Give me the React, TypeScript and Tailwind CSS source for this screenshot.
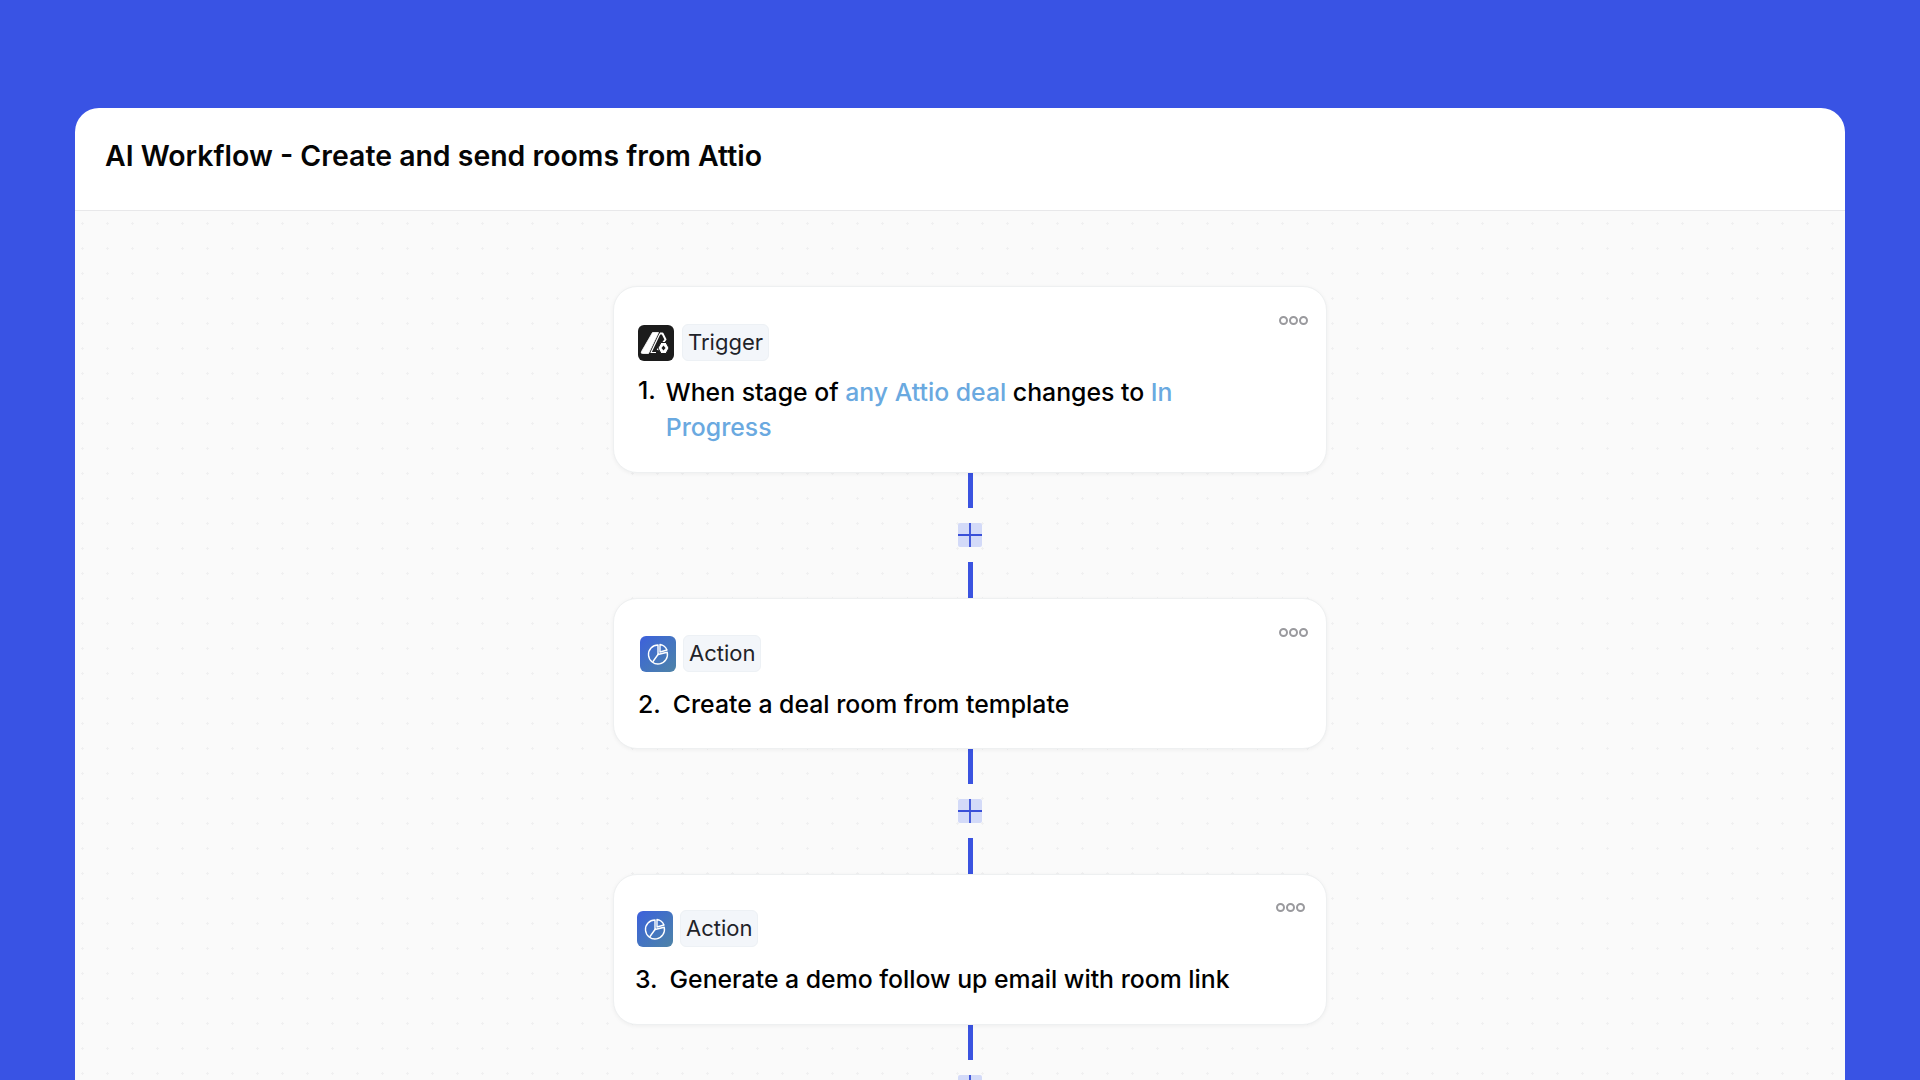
import type { ReactNode } from 'react';

const FONT = "font-['Inter','Noto_Sans',sans-serif]";

function AttioLogo() {
  return (
    <div className="w-[36px] h-[36px] rounded-[6px] bg-[#1c1c1c] flex items-center justify-center">
      <svg width="36" height="36" viewBox="0 0 36 36">
        <path d="M14.5 7.5 L20.5 7.5 L10.5 28.5 L4.5 28.5 Q2.5 28.5 3.5 26.5 Z" fill="#fff" stroke="#fff" strokeWidth="0.8" strokeLinejoin="round" />
        <path d="M22 8.5 L24.5 8.5 L27.5 14.5 L19.5 25" fill="none" stroke="#fff" strokeWidth="2" strokeLinejoin="round" />
        <path d="M22 8.5 L13 27.5 L18 27.5" fill="none" stroke="#fff" strokeWidth="1.2" strokeLinejoin="round" />
        <path d="M23 17.5 L28 17.5 L31 23 L28 28.5 L23 28.5 L20 23 Z" fill="#fff" stroke="#1c1c1c" strokeWidth="1" />
        <path d="M25.5 20.5 L27.5 23 L25.5 25.5 L23.5 23 Z" fill="#1c1c1c" />
      </svg>
    </div>
  );
}

function RoomIcon() {
  return (
    <div className="w-[36px] h-[36px] rounded-[6px] bg-gradient-to-br from-[#3d5fdc] to-[#4f83a6] flex items-center justify-center">
      <svg width="24" height="24" viewBox="0 0 24 24" fill="none" stroke="#fff" strokeWidth="1.4" strokeLinecap="round" strokeLinejoin="round">
        <path d="M12 3a9.5 9.5 0 1 0 9.2 7.2L12 12.5Z" />
        <path d="M12 12.5 7 19.5" />
        <path d="M14 2.4a9.5 9.5 0 0 1 7 5.6l-7 2Z" />
      </svg>
    </div>
  );
}

function Badge({ children }: { children: ReactNode }) {
  return (
    <span className="h-[37px] px-[5px] flex items-center rounded-[6px] bg-[#f3f6fa] border border-[#edf1f5] text-[22px] text-[#1f2329]">
      {children}
    </span>
  );
}

function Connector() {
  return (
    <div className="flex flex-col items-center">
      <div className="w-[5px] h-[35px] bg-[#3a53e0]" />
      <div className="mt-[15px] w-[24px] h-[24px] rounded-[2px] bg-[#d3daf8] flex items-center justify-center">
        <svg width="26" height="26" viewBox="0 0 26 26" fill="none" stroke="#3a50d8" strokeWidth="2">
          <path d="M13 0v26M0 13h26" />
        </svg>
      </div>
      <div className="mt-[15px] w-[5px] h-[36px] bg-[#3a53e0]" />
    </div>
  );
}

function Card({ icon, label, number, children, box, headClass, textClass, menuPos, numberUp }: {
  icon: ReactNode;
  label: string;
  number: string;
  children: ReactNode;
  box: string;
  headClass: string;
  textClass: string;
  menuPos: string;
  numberUp?: boolean;
}) {
  return (
    <div className={`relative w-[714px] ${box} bg-white rounded-[24px] border border-[#eef0f1] shadow-[0_1px_4px_rgba(0,0,0,0.05)]`}>
      <div className={`absolute ${menuPos} flex gap-[1px]`}>
        <span className="w-[9px] h-[9px] rounded-full border-[2px] border-[#9a9a9e]" />
        <span className="w-[9px] h-[9px] rounded-full border-[2px] border-[#9a9a9e]" />
        <span className="w-[9px] h-[9px] rounded-full border-[2px] border-[#9a9a9e]" />
      </div>
      <div className={`flex items-center ${headClass}`}>
        {icon}
        <Badge>{label}</Badge>
      </div>
      <div className={`${textClass} flex text-[24.8px] leading-[35px] font-[450] text-black`}>
        <span className={numberUp ? 'shrink-0 -mt-[2px]' : 'shrink-0'}>{number}</span>
        <div>{children}</div>
      </div>
    </div>
  );
}

export default function App() {
  return (
    <div className={`h-screen overflow-hidden bg-[#3953e4] pt-[108px] px-[75px] ${FONT}`}>
      <div className="h-full bg-white rounded-t-[24px] overflow-hidden flex flex-col">
        <div className="h-[103px] shrink-0 border-b border-[#e8e8ea] px-[30px] pt-[30px]">
          <h1 className="text-[28.45px] leading-[36px] font-semibold text-[#050505]">
            AI Workflow - Create and send rooms from Attio
          </h1>
        </div>
        <div className="flex-1 flex flex-col items-center pt-[75px] pl-[20px] bg-[#fafafa] bg-[radial-gradient(#f0f0f1_1px,transparent_1.2px)] bg-[size:25px_25px] bg-[position:-5px_0px]">
          <Card
            icon={<AttioLogo />}
            label="Trigger"
            number="1."
            box="h-[187px] pt-[37px] pl-[24px] pr-[140px]"
            headClass="gap-[8px]"
            textClass="mt-[14px] gap-[10px]"
            menuPos="top-[29px] right-[18px]"
            numberUp
          >
            When stage of <span className="text-[#6aa9e0]">any Attio deal</span> changes to{' '}
            <span className="text-[#6aa9e0]">In Progress</span>
          </Card>
          <Connector />
          <Card
            icon={<RoomIcon />}
            label="Action"
            number="2."
            box="h-[151px] pt-[36px] pl-[26px]"
            headClass="gap-[7px]"
            textClass="mt-[15px] -ml-[2px] gap-[12px]"
            menuPos="top-[29px] right-[18px]"
          >
            Create a deal room from template
          </Card>
          <Connector />
          <Card
            icon={<RoomIcon />}
            label="Action"
            number="3."
            box="h-[151px] pt-[35px] pl-[23px]"
            headClass="gap-[7px]"
            textClass="mt-[15px] -ml-[2px] gap-[12px]"
            menuPos="top-[28px] right-[21px]"
          >
            Generate a demo follow up email with room link
          </Card>
          <Connector />
        </div>
      </div>
    </div>
  );
}
